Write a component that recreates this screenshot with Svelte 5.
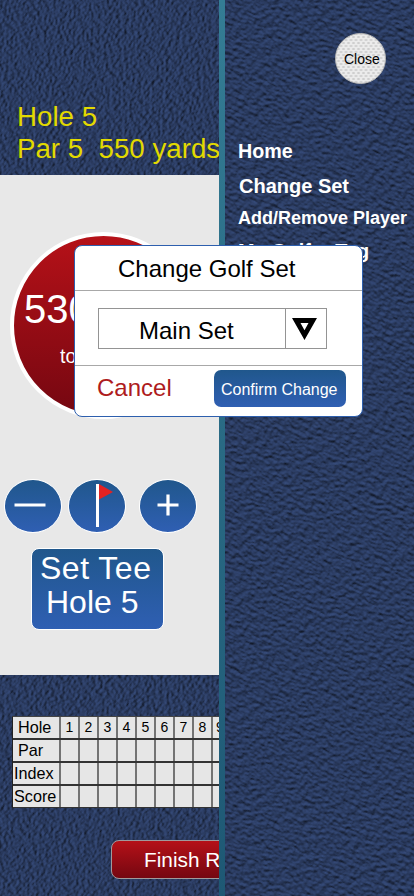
<script>
  const rows = ['Hole', 'Par', 'Index', 'Score'];
  const holes = [1, 2, 3, 4, 5, 6, 7, 8, 9];
</script>

{#snippet leather(id, freq, seed)}
  <svg class="leather {id}" aria-hidden="true">
    <filter id={id} x="0" y="0" width="100%" height="100%" color-interpolation-filters="sRGB">
      <feTurbulence type="fractalNoise" baseFrequency={freq} numOctaves="3" seed={seed} result="n" />
      <feDiffuseLighting in="n" surfaceScale="1.6" diffuseConstant="1.14" lighting-color="#30436d">
        <feDistantLight azimuth="235" elevation="52" />
      </feDiffuseLighting>
    </filter>
    <rect width="100%" height="100%" filter="url(#{id})" />
  </svg>
{/snippet}

<div class="screen">
  <main>
    {@render leather('grain', '0.27 0.36', 4)}
    <header>
      <div>Hole 5</div>
      <div class="par">Par 5&nbsp; 550 yards</div>
    </header>
    <section class="play">
      <div class="dial">
        <div class="distance">530</div>
        <div class="target">to</div>
      </div>
      <div class="controls">
        <button aria-label="minus"><svg viewBox="0 0 58 54"><path d="M10.500 26H41.500" stroke="#fff" stroke-width="3" /></svg></button>
        <button aria-label="flag"><svg viewBox="0 0 58 54"><path d="M31 5L45 13L31 20.500Z" fill="#e32222" /><path d="M29.500 5V48" stroke="#fff" stroke-width="3" /></svg></button>
        <button aria-label="plus" class="plus"><svg viewBox="0 0 58 54"><path d="M18.500 26H39.500M29 15.500V36.500" stroke="#fff" stroke-width="3.200" /></svg></button>
      </div>
      <button class="tee"><span>Set Tee</span><span class="second">Hole 5</span></button>
    </section>
    <section class="card">
      <div class="score">
        {#each rows as row, i}
          <div class="row">
            <div class="label r{i}">{row}</div>
            {#each holes as hole}
              <div class="cell">{i === 0 ? hole : ''}</div>
            {/each}
          </div>
        {/each}
      </div>
      <button class="finish">Finish R</button>
    </section>
  </main>

  <div class="edge"></div>

  <aside>
    {@render leather('hide', '0.19 0.3', 9)}
    <button class="close">Close</button>
    <nav>
      <div class="home">Home</div>
      <div class="change">Change Set</div>
      <div class="add">Add/Remove Player</div>
      <div class="tag">My Golfer Tag</div>
    </nav>
  </aside>

  <div class="dialog">
    <div class="title">Change Golf Set</div>
    <div class="body">
      <div class="select">
        <div class="value">Main Set</div>
        <div class="arrow">
          <svg width="25" height="22" viewBox="0 0 25 22"><path d="M0 0H25L12.500 22ZM8.500 5L12.500 12.200L16.500 5Z" fill-rule="evenodd" /></svg>
        </div>
      </div>
    </div>
    <div class="actions">
      <div class="cancel">Cancel</div>
      <button class="confirm">Confirm Change</button>
    </div>
  </div>
</div>

<style>
  :global(body) { margin: 0; }
  .screen {
    position: relative;
    display: flex;
    width: 414px;
    height: 896px;
    overflow: hidden;
    background: #28385d;
    font-family: "Liberation Sans", Arial, sans-serif;
    color: #000;
    white-space: nowrap;
  }
  button {
    display: block;
    box-sizing: border-box;
    margin: 0;
    padding: 0;
    border: 0;
    font-family: inherit;
    color: #fff;
  }
  .leather { position: absolute; z-index: -1; }
  .grain { width: 1100px; height: 1100px; left: -440px; top: -100px; transform: rotate(-52deg); }
  .hide { width: 1100px; height: 1100px; left: -450px; top: -100px; transform: rotate(26deg); }
  main { position: relative; z-index: 0; width: 219px; flex: none; overflow: hidden; }
  header {
    box-sizing: border-box;
    height: 175px;
    padding: 101px 0 0 17px;
    font-size: 27.700px;
    line-height: 32px;
    color: #e2d900;
  }
  .play { height: 500px; background: #e8e8e8; overflow: hidden; }
  .dial {
    box-sizing: border-box;
    width: 187px;
    height: 187px;
    margin: 57px 0 0 10px;
    border: 4px solid #fff;
    border-radius: 50%;
    background: linear-gradient(#b51118, #750711);
    color: #fff;
  }
  .distance { padding: 50px 0 0 10px; font-size: 40px; line-height: 46px; }
  .target { padding: 12px 0 0 46px; font-size: 19.500px; line-height: 24px; }
  .controls { display: flex; gap: 6px; margin: 60px 0 0 4px; }
  .controls button {
    width: 58px;
    height: 54px;
    border: 1px solid #fff;
    border-radius: 50%;
    background: linear-gradient(#20578c, #2f5fb3);
  }
  .controls svg { display: block; width: 58px; height: 54px; margin: -1px; }
  .controls .plus { margin-left: 7px; }
  .tee {
    width: 133px;
    height: 82px;
    margin: 15px 0 0 31px;
    border: 1px solid #fff;
    border-radius: 8px;
    background: linear-gradient(#20578c, #2f5fb3);
    font-size: 32px;
    line-height: 34px;
    text-align: left;
  }
  .tee span { display: block; margin: -8px 0 0 8px; letter-spacing: 0.500px; }
  .tee .second { margin: 0 0 0 14px; letter-spacing: 0; }
  .card { padding: 41px 0 0 12px; }
  .score { width: max-content; border-left: 1px solid #222; border-top: 1px solid #444; background: #e6e6e6; }
  .row { box-sizing: border-box; display: flex; height: 23px; border-bottom: 2px solid #333; }
  .row:last-child { height: 22px; border-bottom-width: 1px; }
  .label, .cell { box-sizing: border-box; border-right: 2px solid #737373; line-height: 20px; }
  .label { width: 48px; font-size: 16.200px; }
  .r0, .r1 { padding-left: 5px; }
  .r2, .r3 { padding-left: 1px; }
  .cell { width: 19px; font-size: 14px; text-align: center; }
  .cell:last-child { text-align: left; padding-left: 3px; }
  .finish {
    width: 191px;
    height: 39px;
    margin: 32px 0 0 99px;
    border: 1px solid #a09a9c;
    border-radius: 8px;
    background: linear-gradient(#b51118, #750711);
    font-size: 20.800px;
    line-height: 37px;
    text-align: left;
    padding-left: 32px;
  }
  .edge { flex: none; width: 6px; background: linear-gradient(#347c94, #1e5874); }
  aside { position: relative; z-index: 0; flex: 1; overflow: hidden; }
  .close {
    width: 51px;
    height: 51px;
    margin: 33px 0 0 110px;
    border: 1px solid #b5b5b5;
    border-radius: 50%;
    background:
      radial-gradient(ellipse 2px 1.500px, #cfcfcf 45%, transparent) 0 0 / 5px 6px,
      radial-gradient(ellipse 2px 1.500px, #cfcfcf 45%, transparent) 2.500px 3px / 5px 6px,
      #ebebeb;
    color: #000;
    font-size: 14px;
    line-height: 51px;
    text-align: left;
    padding-left: 8px;
  }
  nav { padding: 51px 0 0 12px; color: #fff; font-weight: bold; }
  .home { font-size: 19.700px; line-height: 32px; margin-left: 1px; }
  .change { margin: 3px 0 0 2px; font-size: 20px; line-height: 32px; }
  .add { font-size: 18px; line-height: 32px; margin-left: 1px; }
  .tag { font-size: 19.900px; line-height: 34px; margin-left: 1px; }
  .dialog {
    position: absolute;
    left: 74px;
    top: 245px;
    box-sizing: border-box;
    width: 289px;
    height: 172px;
    border: 1px solid #2d5fae;
    border-radius: 8px;
    background: #fff;
    overflow: hidden;
  }
  .title { height: 44px; padding-left: 43px; border-bottom: 1px solid #a8a8a8; font-size: 24px; line-height: 46px; }
  .body { height: 74px; border-bottom: 1px solid #a8a8a8; display: flex; }
  .select { display: flex; box-sizing: border-box; width: 229px; height: 41px; margin: 17px 0 0 23px; border: 1px solid #949494; }
  .value { width: 187px; padding-left: 40px; box-sizing: border-box; border-right: 1px solid #949494; font-size: 24px; line-height: 43px; }
  .arrow { flex: 1; padding: 9px 0 0 6px; }
  .arrow svg { display: block; }
  .actions { display: flex; }
  .cancel { width: 117px; padding-left: 22px; font-size: 24px; line-height: 43px; color: #ae1b20; }
  .confirm {
    width: 132px;
    height: 37px;
    margin-top: 4px;
    border-radius: 7px;
    background: linear-gradient(#20578c, #2f5fb3);
    font-size: 16px;
    line-height: 39px;
    text-align: left;
    padding-left: 7px;
  }
</style>
